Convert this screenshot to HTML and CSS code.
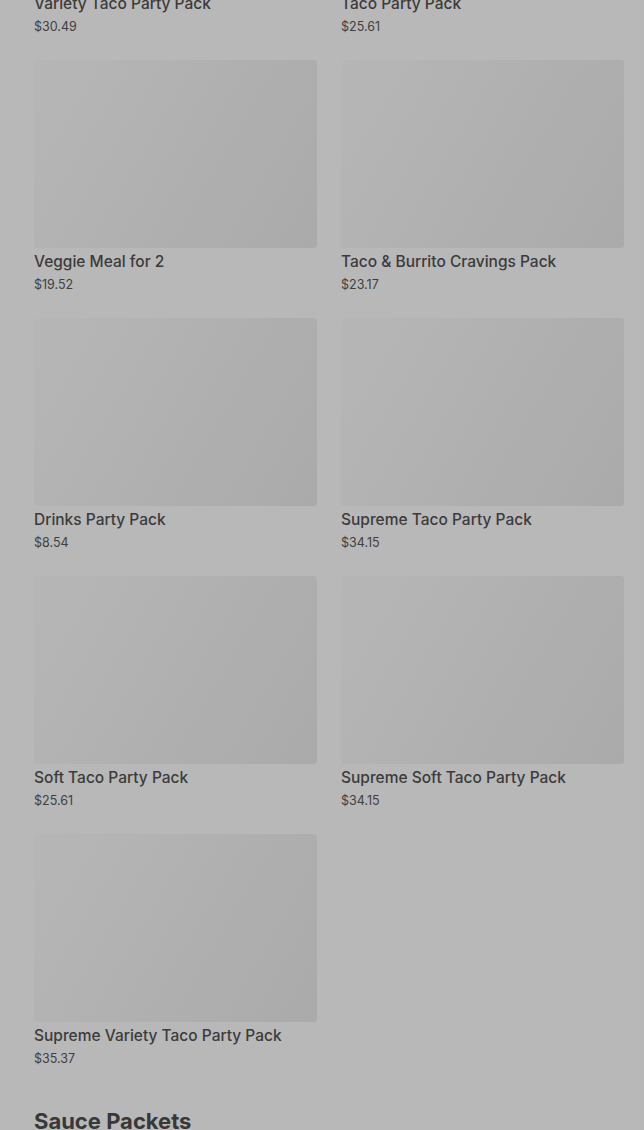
FILE: index.html
```html
<!DOCTYPE html>
<html>
<head>
<meta charset="utf-8">
<link rel="stylesheet" href="styles.css">
</head>
<body>
<main class="menu">
  <section class="grid">
    <div class="item"><div class="thumb"></div><div class="name">Variety Taco Party Pack</div><div class="price">$30.49</div></div>
    <div class="item"><div class="thumb"></div><div class="name">Taco Party Pack</div><div class="price">$25.61</div></div>
    <div class="item"><div class="thumb"></div><div class="name">Veggie Meal for 2</div><div class="price">$19.52</div></div>
    <div class="item"><div class="thumb"></div><div class="name">Taco &amp; Burrito Cravings Pack</div><div class="price">$23.17</div></div>
    <div class="item"><div class="thumb"></div><div class="name">Drinks Party Pack</div><div class="price">$8.54</div></div>
    <div class="item"><div class="thumb"></div><div class="name">Supreme Taco Party Pack</div><div class="price">$34.15</div></div>
    <div class="item"><div class="thumb"></div><div class="name">Soft Taco Party Pack</div><div class="price">$25.61</div></div>
    <div class="item"><div class="thumb"></div><div class="name">Supreme Soft Taco Party Pack</div><div class="price">$34.15</div></div>
    <div class="item"><div class="thumb"></div><div class="name">Supreme Variety Taco Party Pack</div><div class="price">$35.37</div></div>
  </section>
  <h2 class="section-title">Sauce Packets</h2>
</main>
</body>
</html>
```
FILE: styles.css
```css
html, body {
  margin: 0;
  padding: 0;
  background: #b8b8b8;
  overflow: hidden;
}
body {
  font-family: Inter, "Liberation Sans", sans-serif;
  color: #3a3a3a;
}
.menu {
  padding: 0 20px 0 34px;
  margin-top: -198px;
}
.grid {
  display: grid;
  grid-template-columns: 283px 283px;
  column-gap: 24px;
  row-gap: 25px;
}
.item {
  display: flex;
  flex-direction: column;
}
.thumb {
  height: 188px;
  border-radius: 3px;
  background: linear-gradient(120deg, #b6b6b6 0%, #b1b1b1 45%, #aaaaaa 100%);
}
.name {
  margin-top: 4px;
  font-size: 15.5px;
  font-weight: 500;
  line-height: 20px;
  color: #3b3b3b;
}
.price {
  margin-top: 5px;
  font-size: 12.5px;
  line-height: 16px;
  color: #3f3f3f;
}
.section-title {
  margin: 39px 0 0;
  font-size: 22px;
  font-weight: 700;
  line-height: 30px;
  color: #383838;
}
```
